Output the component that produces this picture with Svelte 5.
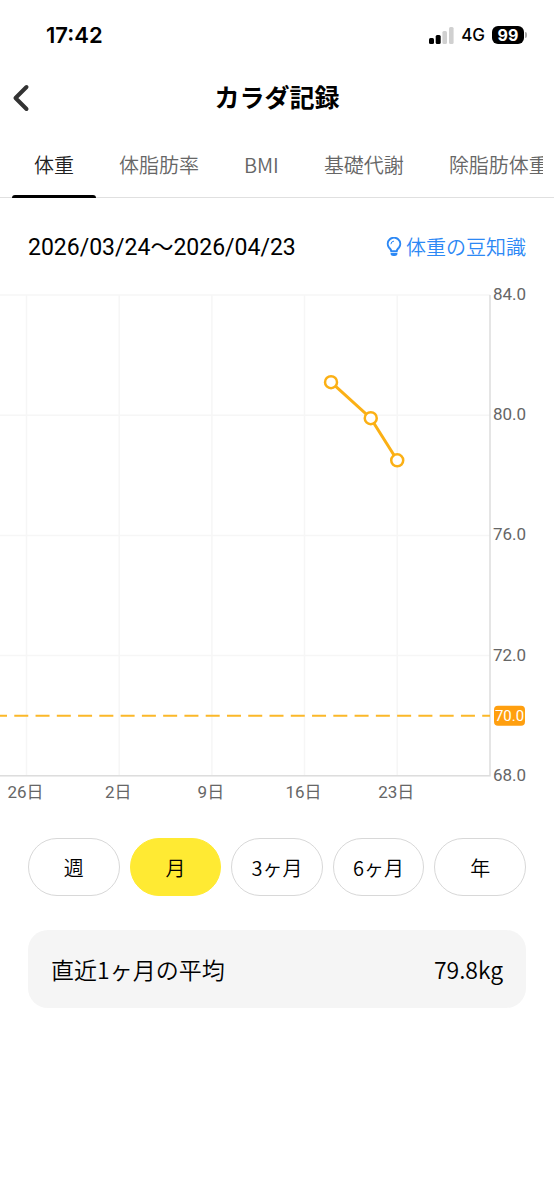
<script>
    let activeTab = $state("体重");
    let activePeriod = $state("月");

    const tabs = ["体重", "体脂肪率", "BMI", "基礎代謝", "除脂肪体重"];
    const periods = ["週", "月", "3ヶ月", "6ヶ月", "年"];

    // day = days since 3/26
    const records = [
        { day: 23, weight: 81.1 },
        { day: 26, weight: 79.9 },
        { day: 28, weight: 78.5 }
    ];
    const weeks = [
        { day: 0, label: "26日" },
        { day: 7, label: "2日" },
        { day: 14, label: "9日" },
        { day: 21, label: "16日" },
        { day: 28, label: "23日" }
    ];
    const levels = [84, 80, 76, 72, 68];
    const target = 70;

    const plotRight = 490;
    const xOf = (day) => 26.5 + day * 13.24;
    const yOf = (weight) => 15 + (84 - weight) * 30.05;

    const line = records.map((r) => `${xOf(r.day)},${yOf(r.weight)}`).join(" ");
</script>

<div class="screen">
    <div class="status">
        <span class="time">17:42</span>
        <div class="signals">
            <svg class="bars" viewBox="0 0 25 17" aria-hidden="true">
                <rect x="0" y="11" width="5" height="6" rx="1.5" />
                <rect x="6.7" y="8" width="5" height="9" rx="1.5" />
                <rect class="off" x="13.4" y="4" width="4.6" height="13" rx="1.5" />
                <rect class="off" x="20" y="0" width="4.6" height="17" rx="1.5" />
            </svg>
            <span class="network">4G</span>
            <span class="battery">99</span>
        </div>
    </div>

    <header>
        <button class="back" aria-label="戻る">
            <svg viewBox="0 0 18 28" aria-hidden="true">
                <path d="M14.5 3 L3.5 14 L14.5 25" />
            </svg>
        </button>
        <h1>カラダ記録</h1>
    </header>

    <div class="tabs">
        <nav>
            {#each tabs as tab}
                <button class:active={activeTab === tab} onclick={() => (activeTab = tab)}>{tab}</button>
            {/each}
        </nav>
    </div>

    <div class="range">
        <span class="dates">2026/03/24〜2026/04/23</span>
        <a href="#tips">
            <svg viewBox="0 0 16 20" aria-hidden="true">
                <path class="bulb" d="M5.3 14.2 C5.1 12.3 4.1 11.8 3 10.6 A6.2 6.2 0 1 1 13 10.6 C11.9 11.8 10.9 12.3 10.7 14.2 Z" />
                <path class="shine" d="M4.9 7.2 A3.3 3.3 0 0 1 8 4.1" />
                <path class="base" d="M4.6 16 H11.4 V16.8 C11.4 18.2 10.2 19 8.9 19 H7.1 C5.8 19 4.6 18.2 4.6 16.8 Z" />
            </svg>
            <span>体重の豆知識</span>
        </a>
    </div>

    <svg class="chart" viewBox="0 0 554 530" role="img" aria-label="体重">
        {#each weeks as week}
            <line class="grid" x1={xOf(week.day)} x2={xOf(week.day)} y1={yOf(84)} y2={yOf(68)} />
            <text class="label" x={xOf(week.day) - 1} y="518" text-anchor="middle">{week.label}</text>
        {/each}
        {#each levels as level}
            <line class="grid" x1="0" x2={plotRight} y1={yOf(level)} y2={yOf(level)} />
            <text class="label" x="493" y={yOf(level) + 5}>{level.toFixed(1)}</text>
        {/each}
        <path class="axis" d="M0 {yOf(68)} H{plotRight} V{yOf(84)}" />

        <line class="target" x1="-7" x2={plotRight} y1={yOf(target)} y2={yOf(target)} />
        <rect class="badge" x="494" y={yOf(target) - 10} width="31" height="20" rx="4" />
        <text class="badge-text" x="509.5" y={yOf(target) + 5} text-anchor="middle">{target.toFixed(1)}</text>

        <polyline points={line} />
        {#each records as record}
            <circle cx={xOf(record.day)} cy={yOf(record.weight)} r="6" />
        {/each}
    </svg>

    <div class="periods">
        {#each periods as period}
            <button class:active={activePeriod === period} onclick={() => (activePeriod = period)}>{period}</button>
        {/each}
    </div>

    <div class="average">
        <span>直近1ヶ月の平均</span>
        <span>79.8kg</span>
    </div>
</div>

<style>
    :global(body) {
        background: #fff;
    }

    .screen {
        font-family: "Noto Sans CJK JP", sans-serif;
        font-weight: 350;
        color: #000;
        overflow: hidden;
    }

    button {
        font-family: inherit;
        font-weight: inherit;
        color: inherit;
        background: none;
        border: none;
        padding: 0;
        cursor: pointer;
    }

    .status {
        display: flex;
        justify-content: space-between;
        align-items: center;
        height: 70px;
        padding: 0 27px 0 46px;
        font-family: Inter, sans-serif;
    }

    .time {
        font-size: 22px;
        font-weight: 600;
    }

    .signals {
        display: flex;
        align-items: center;
        gap: 7px;
    }

    .bars {
        width: 25px;
        height: 17px;
    }

    .bars .off {
        fill: #d0d0d0;
    }

    .network {
        font-size: 17px;
        font-weight: 500;
    }

    .battery {
        position: relative;
        width: 32px;
        height: 18px;
        margin-right: 3px;
        border-radius: 6px;
        background: #000;
        color: #fff;
        font-size: 16px;
        font-weight: 700;
        line-height: 18px;
        text-align: center;
    }

    .battery::after {
        content: "";
        position: absolute;
        right: -3px;
        top: 6px;
        width: 2px;
        height: 6px;
        border-radius: 0 2px 2px 0;
        background: #aaa;
    }

    header {
        display: grid;
        grid-template-columns: 40px 1fr 40px;
        align-items: center;
        height: 56px;
    }

    .back {
        display: flex;
        padding-left: 12px;
    }

    .back svg {
        width: 18px;
        height: 28px;
        fill: none;
        stroke: #333;
        stroke-width: 4;
        stroke-linecap: round;
        stroke-linejoin: round;
    }

    h1 {
        margin: 0;
        padding-bottom: 4px;
        font-size: 25px;
        font-weight: 700;
        text-align: center;
    }

    .tabs {
        margin-top: 8px;
        padding: 0 11px 0 12px;
        border-bottom: 1px solid #e0e0e0;
    }

    nav {
        display: flex;
        gap: 1px;
        overflow: hidden;
        margin-bottom: -1px;
    }

    nav button {
        position: relative;
        flex: none;
        height: 64px;
        padding: 0 22px 4px;
        font-size: 20px;
        color: #666;
        white-space: nowrap;
    }

    nav .active {
        color: #222;
    }

    nav .active::after {
        content: "";
        position: absolute;
        left: 0;
        right: 0;
        bottom: 0;
        height: 3px;
        border-radius: 3px 3px 0 0;
        background: #000;
    }

    .range {
        display: flex;
        justify-content: space-between;
        align-items: baseline;
        height: 82px;
        padding: 30px 28px 0;
        box-sizing: border-box;
    }

    .dates {
        font-family: Roboto, "Noto Sans CJK JP", sans-serif;
        font-size: 23px;
        font-weight: 400;
    }

    .range a {
        display: inline-block;
        font-size: 20px;
        color: #2c88f5;
        text-decoration: none;
    }

    .range svg {
        width: 16px;
        height: 20px;
        margin-right: 5px;
        vertical-align: -2px;
        fill: none;
        stroke: #2c88f5;
        stroke-width: 2;
    }

    .range a span {
        margin-left: -5px;
    }

    .range .shine {
        stroke-width: 1;
    }

    .range .base {
        fill: #2c88f5;
        stroke: none;
    }

    .chart {
        display: block;
        width: 100%;
    }

    .grid {
        stroke: #f6f6f6;
        stroke-width: 1.5;
    }

    .axis {
        fill: none;
        stroke: #ddd;
        stroke-width: 1.5;
    }

    .label {
        font-family: Roboto, "Noto Sans CJK JP", sans-serif;
        font-size: 17px;
        font-weight: 400;
        fill: #666;
    }

    .target {
        stroke: #fbb829;
        stroke-width: 2;
        stroke-dasharray: 14 7.27;
    }

    .badge {
        fill: #ff9f0f;
    }

    .badge-text {
        font-family: Roboto, sans-serif;
        font-size: 15px;
        font-weight: 400;
        fill: #fff;
    }

    polyline {
        fill: none;
        stroke: #fbb015;
        stroke-width: 3;
    }

    circle {
        fill: #fff;
        stroke: #fbb015;
        stroke-width: 2.5;
    }

    .periods {
        display: grid;
        grid-template-columns: repeat(5, 1fr);
        gap: 10px;
        padding: 28px 28px 34px;
    }

    .periods button {
        height: 58px;
        border: 1px solid #d8d8d8;
        border-radius: 29px;
        font-size: 20px;
    }

    .periods .active {
        border-color: #ffea33;
        background: #ffea33;
    }

    .average {
        display: flex;
        justify-content: space-between;
        align-items: center;
        margin: 0 28px;
        padding: 22px 23px;
        border-radius: 20px;
        background: #f5f5f5;
        font-size: 23px;
        line-height: 34px;
    }
</style>
